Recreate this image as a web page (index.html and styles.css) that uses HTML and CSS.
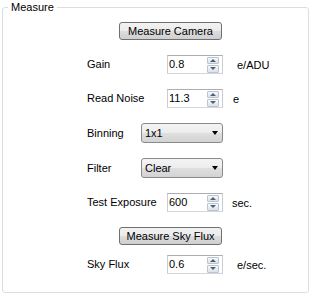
FILE: index.html
```html
<!DOCTYPE html>
<html lang="en">

<head>
    <meta charset="utf-8">
    <title>Measure</title>
    <link rel="stylesheet" href="styles.css">
</head>

<body>
<fieldset class="group">
    <legend>Measure</legend>
    <div class="content">
        <div class="row">
            <button class="btn">Measure Camera</button>
        </div>

        <div class="row">
            <span class="label">Gain</span>
            <div class="spin">
                <span class="value">0.8</span>
                <span class="arrows"><i class="up"></i><i class="down"></i></span>
            </div>
            <span class="unit">e/ADU</span>
        </div>

        <div class="row">
            <span class="label">Read Noise</span>
            <div class="spin">
                <span class="value">11.3</span>
                <span class="arrows"><i class="up"></i><i class="down"></i></span>
            </div>
            <span class="unit unit-near">e</span>
        </div>

        <div class="row">
            <span class="label label-short">Binning</span>
            <div class="combo"><span class="value">1x1</span><i class="caret"></i></div>
        </div>

        <div class="row">
            <span class="label label-short">Filter</span>
            <div class="combo"><span class="value">Clear</span><i class="caret"></i></div>
        </div>

        <div class="row">
            <span class="label">Test Exposure</span>
            <div class="spin">
                <span class="value">600</span>
                <span class="arrows"><i class="up"></i><i class="down"></i></span>
            </div>
            <span class="unit unit-sec">sec.</span>
        </div>

        <div class="row row-tight">
            <button class="btn">Measure Sky Flux</button>
        </div>

        <div class="row">
            <span class="label">Sky Flux</span>
            <div class="spin">
                <span class="value">0.6</span>
                <span class="arrows"><i class="up"></i><i class="down"></i></span>
            </div>
            <span class="unit">e/sec.</span>
        </div>
    </div>
</fieldset>
</body>

</html>
```
FILE: styles.css
```css
* {
    margin: 0;
    padding: 0;
    box-sizing: border-box;
}

body {
    background-color: #FFFFFF;
    color: #000000;
    font-family: "Liberation Sans", Arial, sans-serif;
    font-size: 11px;
    padding: 1px 8px 0 2px;
}

.group {
    height: 292px;
    min-width: 0;
    border: 1px solid #D5DFE5;
    border-radius: 3px;
}

.group legend {
    margin-left: 5px;
    padding: 0 3px;
    line-height: 13px;
}

.content {
    padding: 8px 0 0 84px;
}

.row {
    display: flex;
    align-items: center;
    margin-bottom: 15px;
}

.row-tight {
    margin-bottom: 10px;
}

.btn {
    width: 103px;
    height: 18px;
    margin-left: 32px;
    border: 1px solid #707070;
    border-radius: 3px;
    background: linear-gradient(#F2F2F2 0%, #EBEBEB 50%, #DDDDDD 51%, #CFCFCF 100%);
    font-family: inherit;
    font-size: 11px;
    color: #000000;
    line-height: 16px;
}

.label {
    width: 80px;
    line-height: 13px;
}

.label-short {
    width: 54px;
}

/* numeric up-down */
.spin {
    width: 56px;
    height: 19px;
    display: flex;
    align-items: center;
    border: 1px solid #ABADB3;
    border-color: #ABADB3 #C9CDD3 #D2D7DD #C9CDD3;
    background-color: #FFFFFF;
}

.spin .value {
    flex: 1;
    padding-left: 1px;
    line-height: 15px;
}

.arrows {
    width: 12px;
    height: 16px;
    margin-right: 3px;
    display: flex;
    flex-direction: column;
    gap: 1px;
}

.arrows i {
    flex: 1;
    display: flex;
    align-items: center;
    justify-content: center;
    border: 1px solid #BCC4CD;
    border-radius: 1px;
    background: linear-gradient(#F7F9FB, #DCE2E9);
}

.arrows .up::after {
    content: "";
    border-left: 3px solid transparent;
    border-right: 3px solid transparent;
    border-bottom: 3px solid #4C607A;
}

.arrows .down::after {
    content: "";
    border-left: 3px solid transparent;
    border-right: 3px solid transparent;
    border-top: 3px solid #4C607A;
}

.unit {
    margin-left: 14px;
}

.unit-near {
    margin-left: 10px;
}

.unit-sec {
    margin-left: 9px;
}

/* drop-down */
.combo {
    width: 82px;
    height: 20px;
    display: flex;
    align-items: center;
    padding: 0 4px 0 3px;
    border: 1px solid #8A8A8A;
    border-radius: 3px;
    background: linear-gradient(#F4F4F4 0%, #ECECEC 50%, #DFDFDF 51%, #D3D3D3 100%);
}

.combo .value {
    flex: 1;
}

.combo .caret {
    border-left: 3.5px solid transparent;
    border-right: 3.5px solid transparent;
    border-top: 4px solid #000000;
}
```
